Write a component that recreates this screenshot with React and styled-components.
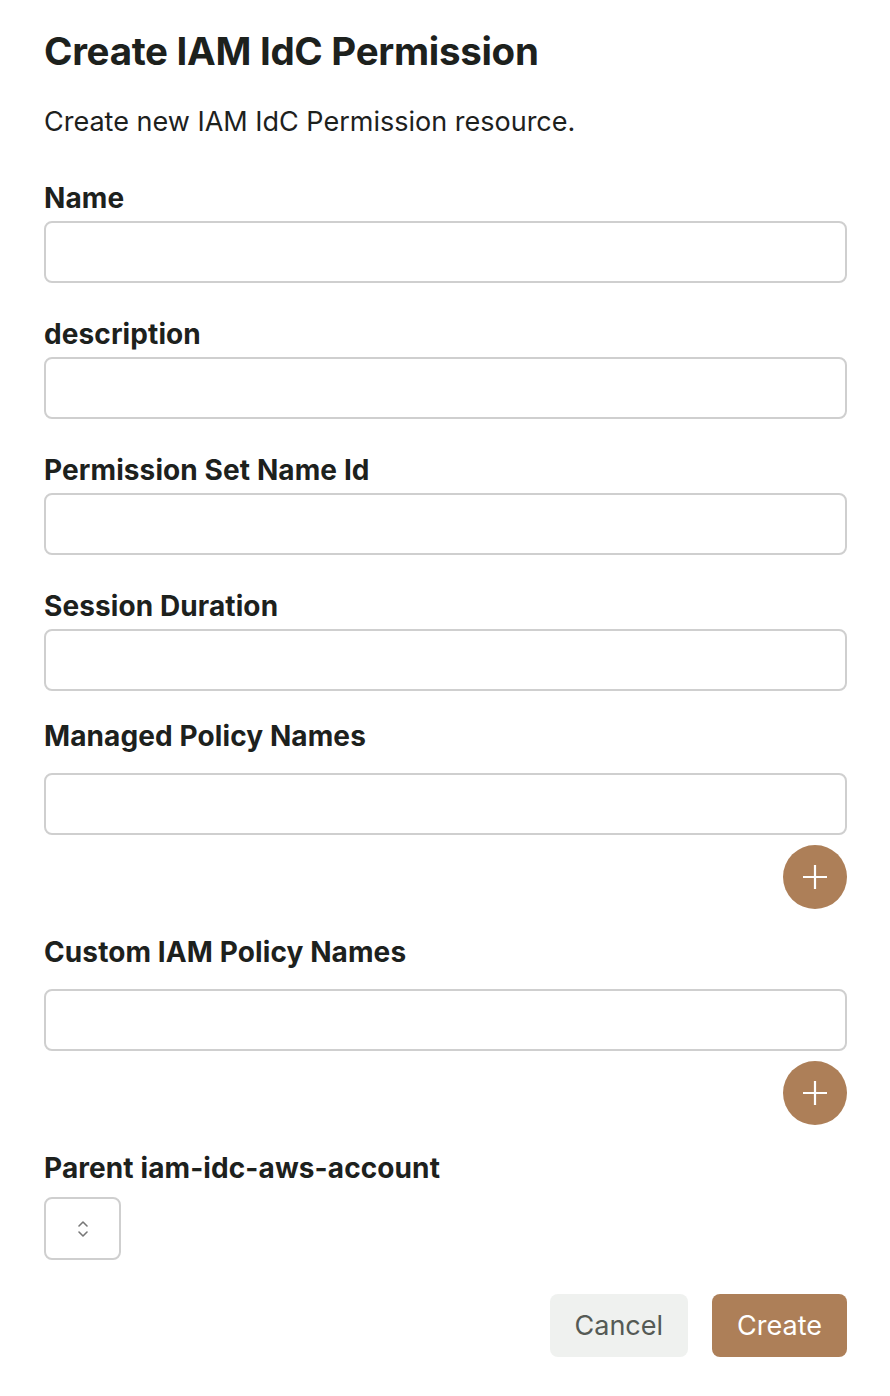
import React from "react";
import styled, { createGlobalStyle } from "styled-components";

const Global = createGlobalStyle`
  body { margin: 0; background: #fff; font-family: Inter, "Noto Sans", sans-serif; color: #1d211d; }
`;

const Page = styled.div`
  padding: 28px 43px 40px 44px;
  display: flex;
  flex-direction: column;
`;

const Title = styled.h1`
  margin: 0;
  font-size: 38.5px;
  line-height: 46px;
  font-weight: 700;
  letter-spacing: -0.3px;
`;

const Subtitle = styled.p`
  margin: 32px 0 0;
  font-size: 27px;
  line-height: 32px;
  font-weight: 400;
`;

const Field = styled.div`
  display: flex;
  flex-direction: column;
  margin-top: ${(p) => p.$top}px;
`;

const Label = styled.label`
  font-size: 28px;
  line-height: 36px;
  font-weight: 700;
  letter-spacing: 0.1px;
  margin-bottom: ${(p) => p.$gap}px;
`;

const Input = styled.input`
  box-sizing: border-box;
  height: 62px;
  width: 100%;
  border: 2px solid #cfcfcf;
  border-radius: 8px;
  background: #fff;
  font: inherit;
  font-size: 24px;
  padding: 0 14px;
  outline: none;
`;

const AddRow = styled.div`
  display: flex;
  justify-content: flex-end;
  margin-top: 10px;
`;

const RoundButton = styled.button`
  width: 64px;
  height: 64px;
  border-radius: 50%;
  border: none;
  background: #ad7f58;
  display: flex;
  align-items: center;
  justify-content: center;
  padding: 0;
  cursor: pointer;
`;

const Select = styled.button`
  box-sizing: border-box;
  width: 77px;
  height: 63px;
  border: 2px solid #cfcfcf;
  border-radius: 8px;
  background: #fff;
  display: flex;
  align-items: center;
  justify-content: center;
  padding: 0;
`;

const Actions = styled.div`
  display: flex;
  justify-content: flex-end;
  gap: 24px;
  margin-top: 34px;
`;

const ActionButton = styled.button`
  height: 63px;
  padding: 0 25px;
  border: none;
  border-radius: 8px;
  font-family: Inter, "Noto Sans", sans-serif;
  font-size: 27px;
  font-weight: 400;
  background: ${(p) => (p.$primary ? "#ad7f58" : "#eff1ef")};
  color: ${(p) => (p.$primary ? "#ffffff" : "#555a55")};
`;

const Plus = () => (
  <svg width="24" height="24" viewBox="0 0 24 24" fill="none" stroke="#fff" strokeWidth="2.2" strokeLinecap="square">
    <path d="M12 1v22M1 12h22" />
  </svg>
);

const UpDown = () => (
  <svg width="12" height="20" viewBox="0 0 12 20" fill="none" stroke="#777" strokeWidth="1.6" strokeLinecap="round" strokeLinejoin="round">
    <path d="M2 7l4-4 4 4M2 13l4 4 4-4" />
  </svg>
);

export default function App() {
  return (
    <>
      <Global />
      <Page>
        <Title>Create IAM IdC Permission</Title>
        <Subtitle>Create new IAM IdC Permission resource.</Subtitle>

        <Field $top={42}>
          <Label $gap={5}>Name</Label>
          <Input />
        </Field>
        <Field $top={33}>
          <Label $gap={5}>description</Label>
          <Input />
        </Field>
        <Field $top={33}>
          <Label $gap={5}>Permission Set Name Id</Label>
          <Input />
        </Field>
        <Field $top={33}>
          <Label $gap={5}>Session Duration</Label>
          <Input />
        </Field>
        <Field $top={27}>
          <Label $gap={19}>Managed Policy Names</Label>
          <Input />
          <AddRow>
            <RoundButton aria-label="add"><Plus /></RoundButton>
          </AddRow>
        </Field>
        <Field $top={25}>
          <Label $gap={19}>Custom IAM Policy Names</Label>
          <Input />
          <AddRow>
            <RoundButton aria-label="add"><Plus /></RoundButton>
          </AddRow>
        </Field>
        <Field $top={25}>
          <Label $gap={11}>Parent iam-idc-aws-account</Label>
          <Select aria-label="select"><UpDown /></Select>
        </Field>
        <Actions>
          <ActionButton>Cancel</ActionButton>
          <ActionButton $primary>Create</ActionButton>
        </Actions>
      </Page>
    </>
  );
}
